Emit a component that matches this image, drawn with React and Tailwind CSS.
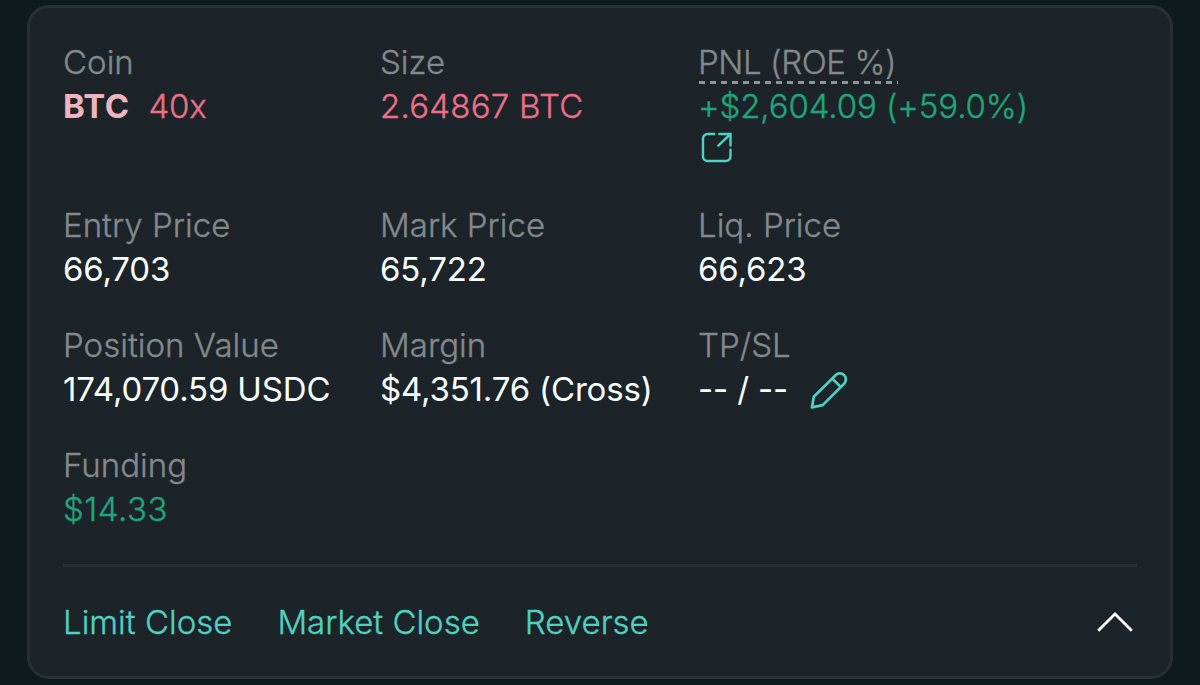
import clsx from 'clsx';

// Light weight with a hairline stroke sits between Inter 300 and 400
const THIN = 'font-light [-webkit-text-stroke:0.35px_currentColor]';

const Field = ({ label, children, color = 'text-[#f6fefd]', labelClass, valueClass }) => (
  <div className="text-[33px] leading-[44px] whitespace-nowrap">
    <div className={clsx('text-[#83898d]', THIN)}>
      <span className={clsx('inline-block', labelClass || 'tracking-[0.02px]')}>{label}</span>
    </div>
    <div className={clsx(color, valueClass || 'tracking-[-0.17px]')}>{children}</div>
  </div>
);

const ShareIcon = () => (
  <svg className="h-[32px] w-[32px] text-[#50d2c1]" viewBox="0 0 32 32" fill="none" stroke="currentColor" strokeWidth="2.4" strokeLinecap="round">
    <path d="M13.3 2H6.5A4.5 4.5 0 0 0 2 6.5v18A4.5 4.5 0 0 0 6.5 29H25a4.5 4.5 0 0 0 4.5-4.5v-6.8" />
    <path d="M18.4 2h11.1v11.4M28.6 2.8L17.3 13.6" />
  </svg>
);

const PencilIcon = () => (
  <svg className="mt-[2px] -mb-[2px] h-[40px] w-[40px] text-[#50d2c1]" viewBox="0 0 40 40" fill="none" stroke="currentColor" strokeWidth="2.7" strokeLinecap="round" strokeLinejoin="round">
    <path d="M2.9 36.4l1.9-10.7L26.6 4.2a5.6 5.6 0 0 1 8.6 8.4L13.7 34.1z" />
    <path d="M23.4 7.6l8.3 8.3" />
  </svg>
);

export default function App() {
  return (
    <div className="h-[685px] w-full overflow-hidden bg-[#0f1a1f] px-[27px] pt-[5px] font-['Inter',sans-serif]">
      <div className="h-[674px] rounded-[22px] border-3 border-[#273035] bg-[#1c2429] px-[33px] pt-[32px]">
        {/* Position details */}
        <div className="grid grid-cols-[317px_318px_1fr] gap-y-8">
          <Field label="Coin" color="text-[#ed7088]" valueClass="tracking-[-0.2px]">
            <span className="font-bold tracking-[0.4px] text-[#f0b4c0]">BTC</span>
            <span className={clsx('ml-[19px]', THIN)}>40x</span>
          </Field>
          <Field label="Size" color="text-[#ed7088]" valueClass={clsx('tracking-[0.25px]', THIN)}>
            2.64867 BTC
          </Field>
          <div className="h-[131px]">
            <Field
              label={
                <>
                  PNL (ROE %)
                  <span className="absolute bottom-0 left-[1px] h-[3px] w-[199px] bg-[repeating-linear-gradient(90deg,#8f9598_0_6px,transparent_6px_11px)]" />
                </>
              }
              labelClass="relative tracking-[-0.4px]"
              color="text-[#1fa67d]"
              valueClass={clsx('tracking-[-0.1px]', THIN)}
            >
              +$2,604.09 (+59.0%)
            </Field>
            <div className="pt-[4px] pl-[3px]">
              <ShareIcon />
            </div>
          </div>

          <Field label="Entry Price">66,703</Field>
          <Field label="Mark Price">65,722</Field>
          <Field label="Liq. Price">66,623</Field>

          <Field label="Position Value">174,070.59 USDC</Field>
          <Field label="Margin">$4,351.76 (Cross)</Field>
          <Field label="TP/SL">
            <div className="flex items-center gap-[21px]">
              <span>-- / --</span>
              <PencilIcon />
            </div>
          </Field>

          <Field label="Funding" color="text-[#1fa67d]" valueClass={clsx('tracking-[0.5px]', THIN)}>
            $14.33
          </Field>
        </div>

        {/* Actions */}
        <div className="mt-[33px] flex items-center border-t-3 border-[#273035] pt-[33px] text-[33px] leading-[44px] text-[#50d2c1]">
          <div className={clsx('flex gap-[45px]', THIN)}>
            <span>Limit Close</span>
            <span>Market Close</span>
            <span>Reverse</span>
          </div>
          <svg className="mr-[4px] ml-auto h-[22px] w-[36px] text-white" viewBox="0 0 36 22" fill="none" stroke="currentColor" strokeWidth="2.8">
            <path d="M1.2 19.8L18 3l16.8 16.8" />
          </svg>
        </div>
      </div>
    </div>
  );
}
